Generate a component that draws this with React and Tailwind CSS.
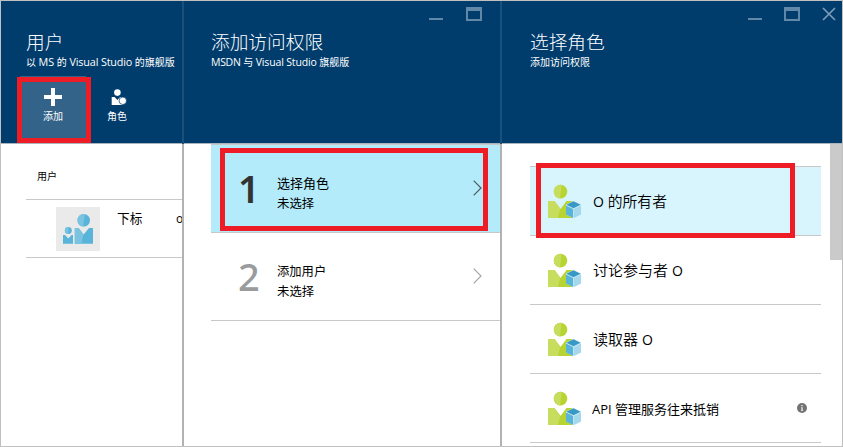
import React from 'react';

function Minimize() {
  return (
    <svg width="14" height="14" viewBox="0 0 14 14" className="block">
      <rect x="0" y="11" width="14" height="2" fill="#6288a9" />
    </svg>
  );
}

function Maximize() {
  return (
    <svg width="16" height="14" viewBox="0 0 16 14" className="block">
      <path d="M0 0H16V14H0ZM2 4V12H14V4Z" fill="#6288a9" fillRule="evenodd" />
    </svg>
  );
}

function Close() {
  return (
    <svg width="14" height="14" viewBox="0 0 14 14" className="block">
      <path d="M1 1L13 13M13 1L1 13" stroke="#7b9bb7" strokeWidth="1.7" />
    </svg>
  );
}

function RoleIcon() {
  return (
    <svg width="33" height="34" viewBox="0 0 33 34" className="block shrink-0">
      <circle cx="12.5" cy="7.6" r="6.8" fill="#b8d432" />
      <path d="M13.6 .9A6.8 6.8 0 1 0 12 14.4Z" fill="#c6dd5d" />
      <path d="M0 17H6.5L12.5 25L18.5 17H24V34H0Z" fill="#b8d432" />
      <path d="M0 17H6.5L12.2 24.6L10 34H0Z" fill="#c6dd5d" />
      <path d="M25.5 17L33 20.6V30.4L25.5 34L18 30.4V20.6Z" fill="#cdebf5" />
      <path d="M25.5 17.2L32.6 20.8L25.5 24.3L18.4 20.8Z" fill="#3999c6" />
      <path d="M18 21.6L25.1 25.1V34L18 30.4Z" fill="#59b4d9" />
      <path d="M33 21.6L25.9 25.1V34L33 30.4Z" fill="#a5d8ec" />
    </svg>
  );
}

function UsersIcon() {
  return (
    <svg width="44" height="44" viewBox="0 0 44 44" className="block shrink-0 bg-[#eaeaea]">
      <circle cx="27.7" cy="13.3" r="6.3" fill="#59b4d9" />
      <path d="M28.8 7.1A6.3 6.3 0 1 0 27.2 19.6Z" fill="#7ac3e1" />
      <path d="M18.8 21H22.5L27.7 27.5L33 21H37V36.8H18.8Z" fill="#59b4d9" />
      <path d="M18.8 21H22.5L27.4 27.4L25.5 36.8H18.8Z" fill="#7ac3e1" />
      <circle cx="12.3" cy="23.5" r="3.5" fill="#59b4d9" />
      <path d="M12.8 20A3.5 3.5 0 1 0 12 27Z" fill="#7ac3e1" />
      <path d="M7 28H9L12.3 31.5L15.6 28H17V36.8H7Z" fill="#59b4d9" />
    </svg>
  );
}

function Chevron({ color }) {
  return (
    <svg width="9" height="16" viewBox="0 0 9 16" className="block">
      <path d="M.7 .7L8 8L.7 15.3" fill="none" stroke={color} strokeWidth="1.2" />
    </svg>
  );
}

function Heading({ title, subtitle }) {
  return (
    <div className="whitespace-nowrap text-white">
      <h1 className="h-[24px] text-[18.7px] font-light leading-[24px]">{title}</h1>
      <div className="-mt-px h-[15px] leading-[14px]">{subtitle}</div>
    </div>
  );
}

function Divider() {
  return (
    <div className="flex w-[2px] shrink-0 flex-col">
      <div className="h-[143px] bg-[#1a507c]" />
      <div className="flex-1 bg-[#b2b2b2]" />
    </div>
  );
}

function Step({ number, title, tone, chevron, className }) {
  return (
    <div className={`flex items-start border-b border-[#c8c8c8] ${className}`}>
      <div className={`w-[66px] pl-[27px] pt-[20px] font-['Noto_Sans','Open_Sans'] text-[38px] leading-[46px] ${tone}`}>{number}</div>
      <div className="w-[196px] whitespace-nowrap pt-[28px] text-[13px] leading-[20px]">
        <div className="h-[20px]">{title}</div>
        <div className="h-[20px] pt-px text-[12.4px]">未选择</div>
      </div>
      <div className="pt-[35px]"><Chevron color={chevron} /></div>
    </div>
  );
}

function RoleRow({ children, selected, info }) {
  return (
    <div className={`flex h-[69px] items-center border-b border-[#c8c8c8] pl-[18px] ${selected ? 'bg-[#d8f5fe]' : ''}`}>
      <RoleIcon />
      <div className="flex flex-1 items-center whitespace-nowrap pl-[12px] pt-[1px] leading-[20px]">{children}</div>
      {info && (
        <svg width="10" height="10" viewBox="0 0 10 10" className="mr-[14px] block">
          <circle cx="5" cy="5" r="5" fill="#737373" />
          <path d="M4.2 2H5.8V3.2H4.2ZM4 4.2H5.8V7.2H6.2V8H3.9V7.2H4.3V5H4Z" fill="#ddd" />
        </svg>
      )}
    </div>
  );
}

export default function App() {
  return (
    <div className="relative flex h-[447px] w-[843px] overflow-hidden border border-[#c0c0c0] bg-white font-['Open_Sans','Noto_Sans_CJK_SC',sans-serif] text-black">
      <section className="flex w-[181px] shrink-0 flex-col overflow-hidden">
        <header className="h-[143px] shrink-0 border-b border-[#a9b4bd] bg-[#003c6c] pl-[25px] pt-[29px]">
          <Heading
            title="用户"
            subtitle={
              <span className="text-[10px]">
                以 <span className="text-[10.8px]">MS</span> 的{' '}
                <span className="text-[10.8px] tracking-[-0.15px]">Visual Studio</span> 的旗舰版
              </span>
            }
          />
          <div className="-ml-[6px] mt-[8px] flex text-[10px] leading-[14px] text-white">
            <button className="flex h-[66px] w-[66px] flex-col items-center bg-[#336389] pt-[12px]">
              <svg width="18" height="18" viewBox="0 0 18 18" className="block">
                <path d="M7 0H11V7H18V11H11V18H7V11H0V7H7Z" fill="#fff" />
              </svg>
              <span className="mt-[3px]">添加</span>
            </button>
            <button className="ml-[-2px] flex h-[66px] w-[66px] flex-col items-center pt-[13px]">
              <svg width="16" height="17" viewBox="0 0 16 17" className="ml-[3px] block">
                <circle cx="6.4" cy="3.6" r="3.3" fill="#fff" />
                <path d="M.7 8H3.6L6.4 11L9.2 8H11.5V16H.7Z" fill="#fff" />
                <circle cx="11.8" cy="11.8" r="3.7" fill="#fff" stroke="#003c6c" strokeWidth=".7" />
              </svg>
              <span className="mt-[3px]">角色</span>
            </button>
          </div>
        </header>
        <div className="ml-[25px]">
          <h2 className="h-[56px] border-b border-[#c8c8c8] pl-[11px] pt-[25px] text-[10px] leading-[14px]">用户</h2>
          <div className="flex h-[58px] items-start whitespace-nowrap border-b border-[#c8c8c8] pl-[30px] pt-[7px]">
            <UsersIcon />
            <span className="ml-[17px] w-[59px] shrink-0 pt-[1px] text-[12.7px] leading-[20px]">下标</span>
            <span className="shrink-0 pt-[2px] text-[12px] leading-[20px]">o</span>
          </div>
        </div>
      </section>

      <Divider />

      <section className="flex w-[316px] shrink-0 flex-col">
        <header className="flex h-[143px] shrink-0 border-b border-[#a9b4bd] bg-[#003c6c] pl-[27px]">
          <div className="w-[218px] pt-[29px]">
            <Heading
              title="添加访问权限"
              subtitle={
                <span className="text-[10px]">
                  <span className="text-[10.5px] tracking-[-0.3px]">MSDN</span> 与{' '}
                  <span className="text-[10.5px] tracking-[-0.15px]">Visual Studio</span> 旗舰版
                </span>
              }
            />
          </div>
          <div className="flex gap-[23px] pt-[6px]">
            <Minimize />
            <Maximize />
          </div>
        </header>
        <div className="ml-[27px]">
          <Step number="1" title="选择角色" tone="font-semibold text-[#333]" chevron="#4c5b61" className="h-[89px] border-t bg-[#b3ebfb]" />
          <Step number="2" title={<span className="text-[12.3px]">添加用户</span>} tone="font-medium text-[#999b9d]" chevron="#a6a6a6" className="h-[88px]" />
        </div>
      </section>

      <Divider />

      <section className="flex min-w-0 flex-1 flex-col">
        <header className="flex h-[143px] shrink-0 border-b border-[#a9b4bd] bg-[#003c6c] pl-[28px]">
          <div className="w-[218px] pt-[29px]">
            <Heading title="选择角色" subtitle={<span className="text-[10px]">添加访问权限</span>} />
          </div>
          <div className="flex gap-[22px] pt-[6px]">
            <Minimize />
            <Maximize />
            <Close />
          </div>
        </header>
        <div className="flex min-h-0 flex-1">
          <div className="ml-[28px] mt-[22px] w-[291px] shrink-0">
            <div className="border-t border-[#c8c8c8]">
              <RoleRow selected>
                <span className="text-[14.8px] font-[350]"><span className="text-[14px] font-normal">O</span> 的所有者</span>
              </RoleRow>
              <RoleRow>
                <span className="text-[15px] font-[350]">讨论参与者 <span className="text-[14px] font-normal">O</span></span>
              </RoleRow>
              <RoleRow>
                <span className="text-[15px] font-[350]">读取器 <span className="text-[14px] font-normal">O</span></span>
              </RoleRow>
              <RoleRow info>
                <span className="-ml-px pt-px text-[13px]">API 管理服务往来抵销</span>
              </RoleRow>
            </div>
          </div>
          <div className="ml-[9px] h-[116px] flex-1 bg-[#cacaca]" />
        </div>
      </section>

      <div className="absolute left-[16px] top-[76px] h-[66px] w-[74px] border-[5px] border-[#ee1c25]" />
      <div className="absolute left-[219px] top-[147px] h-[83px] w-[268px] border-[5px] border-[#ee1c25]" />
      <div className="absolute left-[535px] top-[162px] h-[75px] w-[259px] border-[5px] border-[#ee1c25]" />
    </div>
  );
}
